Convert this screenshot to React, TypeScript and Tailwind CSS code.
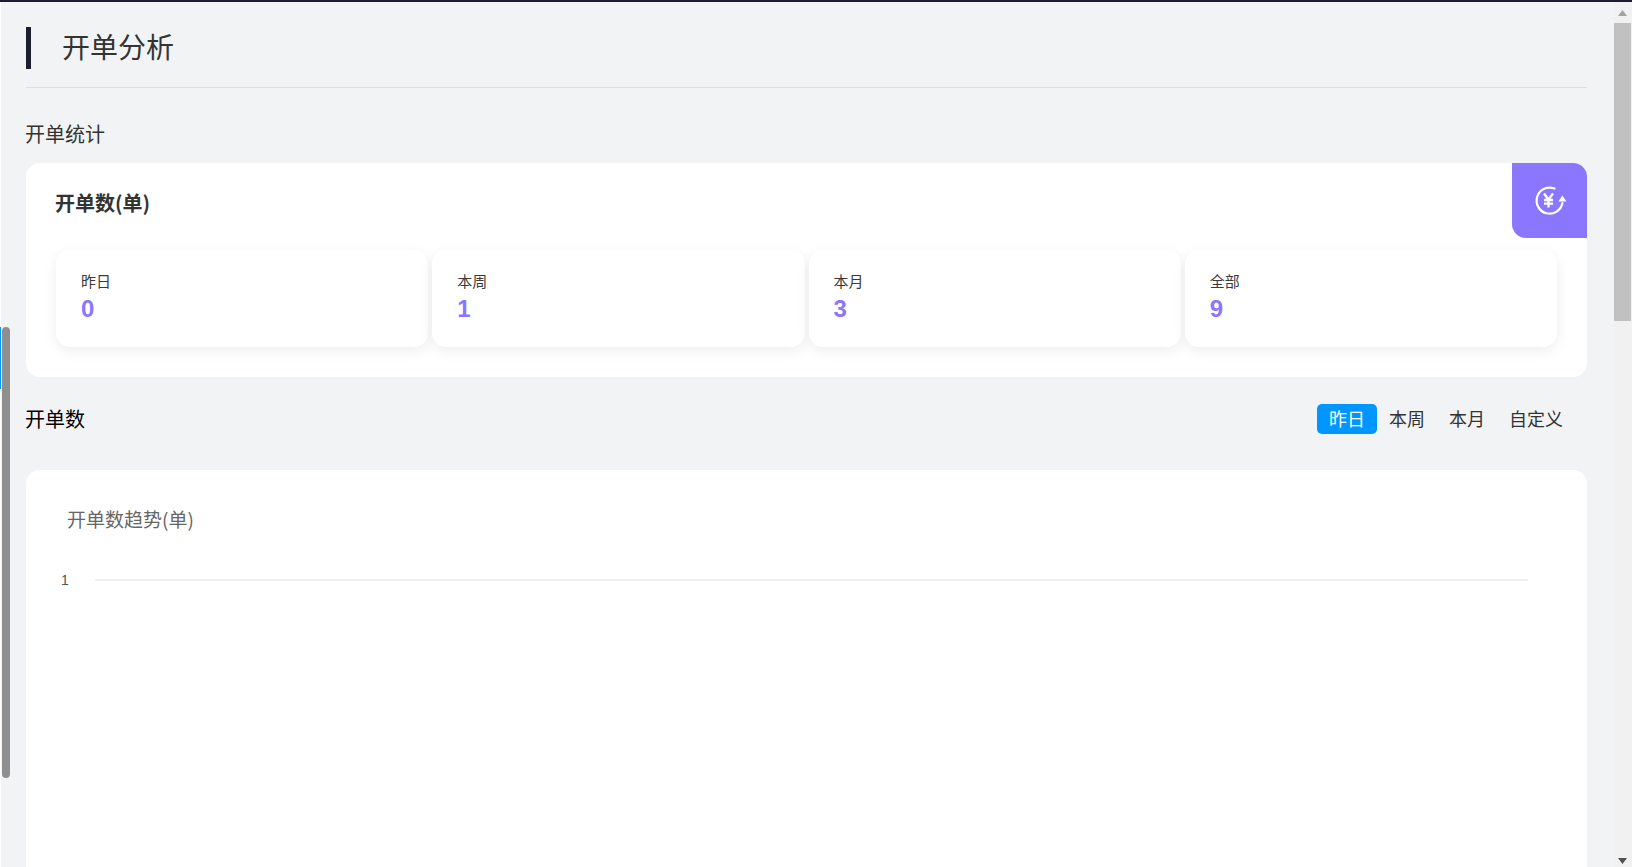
import React from "react";

const font = { fontFamily: '"Noto Sans CJK SC", "Liberation Sans", sans-serif' };

function YuanIcon() {
  return (
    <svg width="34" height="34" viewBox="0 0 34 34" fill="none" stroke="white" strokeLinecap="round">
      <path d="M21.5 4.6A13 13 0 1 0 29.4 19" strokeWidth="2.2" />
      <path d="M29.4 11.5L25.4 17.6H33.4L29.4 11.5Z" fill="white" stroke="none" />
      <path d="M11 9.5L15.5 15.5L20 9.5M15.5 15.5V23.5M11 16H20M11 19.7H20" strokeWidth="2.3" strokeLinecap="butt" />
    </svg>
  );
}

function StatCard({ label, value }: { label: string; value: string }) {
  return (
    <div className="h-[97px] rounded-[14px] bg-white pl-[25px] pt-[21px] shadow-[0_4px_14px_rgba(0,0,0,0.07)]">
      <div className="text-[15px] leading-[20px] text-[#3a3a3a]">{label}</div>
      <div className="mt-[4px] text-[24px] leading-[28px] font-bold text-[#8a76ff]" style={{ fontFamily: '"Liberation Sans", sans-serif' }}>
        {value}
      </div>
    </div>
  );
}

function Tab({ label, active }: { label: string; active?: boolean }) {
  return (
    <div className={`h-[30px] rounded-[5px] px-3 text-[18px] leading-[28px] ${active ? "bg-[#0096ff] text-white" : "text-[#333333]"}`}>
      {label}
    </div>
  );
}

export default function App() {
  return (
    <div className="relative flex h-[867px] flex-col overflow-hidden bg-white" style={font}>
      <div className="h-[2px] shrink-0 bg-[#1c1d30]" />
      <div className="flex min-h-0 flex-1">
        <div className="w-px shrink-0 bg-white" />
        <main className="min-w-0 flex-1 overflow-hidden bg-[#f2f3f5] pl-[25px] pr-[27px]">
          <div className="border-b border-[#dcdee0] pb-[18px] pt-[25px]">
            <div className="h-[42px] border-l-[5px] border-[#1c1d30] pl-[31px] text-[28px] leading-[38px] text-[#333333]">
              开单分析
            </div>
          </div>
          <div className="-ml-px mt-[31px] text-[20px] leading-[30px] text-[#333333]">开单统计</div>
          <section className="relative mt-[14px] h-[214px] rounded-[14px] bg-white px-[30px] pt-[25px]">
            <div className="-ml-px text-[20px] leading-[30px] font-bold text-[#333333]">开单数(单)</div>
            <div className="absolute right-0 top-0 flex h-[75px] w-[75px] items-center justify-center rounded-bl-[14px] rounded-tr-[14px] bg-[#8a76ff]">
              <YuanIcon />
            </div>
            <div className="mt-[32px] grid grid-cols-4 gap-[4px]">
              <StatCard label="昨日" value="0" />
              <StatCard label="本周" value="1" />
              <StatCard label="本月" value="3" />
              <StatCard label="全部" value="9" />
            </div>
          </section>
          <div className="mt-[27px] flex h-[30px] items-center justify-between pr-[12px]">
            <div className="-ml-px text-[20px] leading-[30px] text-black">开单数</div>
            <div className="flex">
              <Tab label="昨日" active />
              <Tab label="本周" />
              <Tab label="本月" />
              <Tab label="自定义" />
            </div>
          </div>
          <section className="mt-[36px] h-[500px] rounded-[14px] bg-white pl-[41px] pr-[59px] pt-[35px]">
            <div className="text-[19px] leading-[28px] text-[#666666]">开单数趋势(单)</div>
            <div className="mt-[39px] flex items-center">
              <span className="-ml-[6px] w-[34px] text-[14px] leading-[16px] text-[#555555]" style={{ fontFamily: '"Liberation Sans", sans-serif' }}>1</span>
              <div className="h-[2px] flex-1 bg-[#eef0f2]" />
            </div>
          </section>
        </main>
        <div className="flex w-[18px] shrink-0 flex-col items-center bg-[#f1f1f2] pr-px">
          <svg width="9" height="6" viewBox="0 0 9 6" className="mt-[8px]"><path d="M4.5 0L9 6H0Z" fill="#a3a3a3" /></svg>
          <div className="mt-[7px] h-[298px] w-[17px] bg-[#c1c1c1]" />
          <div className="flex-1" />
          <svg width="9" height="6" viewBox="0 0 9 6" className="mb-[3px]"><path d="M0 0H9L4.5 6Z" fill="#505050" /></svg>
        </div>
      </div>
      <div className="absolute left-0 top-[327px] h-[62px] w-px bg-[#0096ff]" />
      <div className="absolute left-[2px] top-[327px] h-[451px] w-[8px] rounded-[4px] bg-[#8f8f8f]" />
    </div>
  );
}
